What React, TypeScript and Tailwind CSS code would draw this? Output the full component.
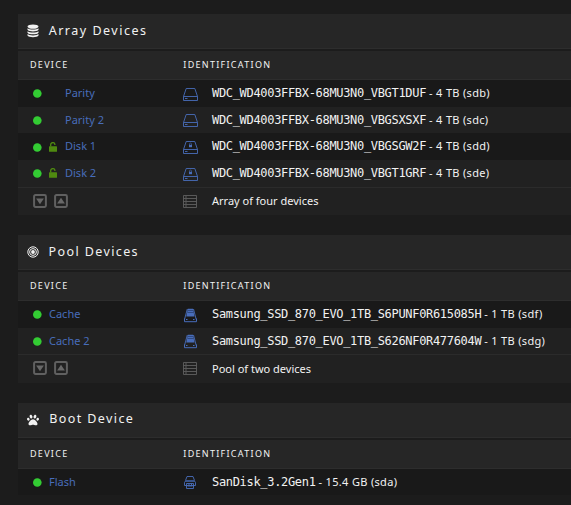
import React from 'react';
import { FaPaw } from 'react-icons/fa';

type IconKind = 'disk' | 'data' | 'ssd' | 'flash';

interface Device {
  name: string;
  icon: IconKind;
  id: string;
  size: string;
  slot?: 'empty' | 'unlocked';
}

function DatabaseIcon() {
  return (
    <svg width="12" height="14" viewBox="0 0 12 14" fill="#f2f2f2">
      <ellipse cx="6" cy="2.6" rx="5.500" ry="2.200" />
      <path d="M.5 4.300C2 6 10 6 11.500 4.300V5.800C10.500 7.900 1.500 7.900.5 5.800Z" />
      <path d="M.5 7.200C2 8.900 10 8.900 11.500 7.200V8.700C10.500 10.800 1.500 10.800.5 8.700Z" />
      <path d="M.5 10.100C2 11.800 10 11.800 11.500 10.100V11.500C10.500 13.700 1.500 13.700.5 11.500Z" />
    </svg>
  );
}

function BullseyeIcon() {
  return (
    <svg width="12" height="12" viewBox="0 0 12 12" fill="none" stroke="#f2f2f2">
      <circle cx="6" cy="6" r="5.200" strokeWidth="1" />
      <circle cx="6" cy="6" r="3.400" strokeWidth="1" />
      <circle cx="6" cy="6" r="1.900" fill="#f2f2f2" stroke="none" />
    </svg>
  );
}

function UnlockIcon() {
  return (
    <svg width="8" height="10" viewBox="0 0 8 10">
      <path d="M1.700 4.500V2.600a2.100 2 0 0 1 4.200 0V3" fill="none" stroke="#4f8a10" strokeWidth="1.300" />
      <rect y="4.300" width="8" height="5.500" rx=".5" fill="#4f8a10" />
    </svg>
  );
}

function DriveIcon({ kind }: { kind: IconKind }) {
  if (kind === 'ssd') {
    return (
      <svg width="15" height="15" viewBox="0 0 15 15" fill="none" stroke="#486dba">
        <path d="M4.300 1 1.500 11.500M10.500 1 13.200 11.500" strokeWidth=".9" />
        <path d="M4.800 .8h5.200l1.500 7.700h-8.200Z" fill="#486dba" stroke="none" />
        <path d="M5 2.500h5M4.500 4.500h6" stroke="#263b69" strokeWidth=".7" />
        <path d="M1.500 10.500v3.200h12v-3.200M3 11.500h1.500M10 11.500h1.500" />
      </svg>
    );
  }
  if (kind === 'flash') {
    return (
      <svg width="15" height="15" viewBox="0 0 15 15" fill="none" stroke="#486dba" strokeWidth=".9">
        <path d="M2.500 5.500 4 1.500h6L11.500 5.500M1.500 10.500v-3l1-1.500h9l1 1.500v3ZM3.500 8.500v5h7v-5ZM2.500 6h9M4.500 11h5M6 8.500v2.500M8.500 8.500v2.500" />
      </svg>
    );
  }
  return (
    <svg width="15" height="15" viewBox="0 0 15 15" fill="none" stroke="#486dba" strokeWidth=".9">
      <path d="M.5 9.500 3.200 1.500h8.600l2.700 8v4H.5ZM.5 9.500h14M2 11.500h2.500" />
      {kind === 'data' && (
        <>
          <path d="M6.500 5V4a1 1 0 0 1 2 0v1" strokeOpacity=".6" />
          <rect x="6" y="4.800" width="3" height="2.400" fill="#486dba" stroke="none" />
        </>
      )}
    </svg>
  );
}

function RackIcon() {
  return (
    <svg width="14" height="15" viewBox="0 0 14 15" fill="none" stroke="#606060" strokeWidth=".9">
      <path d="M.5 1.500h13v12H.5ZM.5 4.500h13M.5 7.500h13M.5 10.500h13M2 3h2M2 6h2M2 9h2M2 12h2" />
    </svg>
  );
}

function CaretBox({ up }: { up?: boolean }) {
  return (
    <svg width="14" height="14" viewBox="0 0 14 14">
      <rect x="1.100" y="1.100" width="11.800" height="11.800" rx="1.300" fill="none" stroke="#606060" strokeWidth="2" />
      <path d={up ? 'M7 3.700 10.900 9.600H3.100Z' : 'M7 10.300 10.900 4.400H3.100Z'} fill="#686868" />
    </svg>
  );
}

function Title({ icon, children, className }: { icon: React.ReactNode; children: string; className: string }) {
  return (
    <div className="flex h-[35px] items-center border-b border-[#2d2d2d] bg-[#262626] pl-[9px] text-[12.5px] text-[#f2f2f2]">
      <span className="flex w-[13px] shrink-0 justify-start pl-[0.400px]">{icon}</span>
      <h2 className={className}>{children}</h2>
    </div>
  );
}

function Head() {
  return (
    <div className="mt-[2px] flex h-[29px] items-center border-b border-[#2d2d2d] bg-[#262626] pl-3 text-[9px] text-[#f2f2f2]">
      <span className="w-[153.300px] tracking-[1.300px]">DEVICE</span>
      <span className="tracking-[1.290px]">IDENTIFICATION</span>
    </div>
  );
}

function Row({ device }: { device: Device }) {
  return (
    <div className="flex h-[26.650px] items-center whitespace-nowrap odd:bg-[#191919] even:bg-[#212121]">
      <div className="flex w-[165px] items-center pl-[15px]">
        <svg className="mr-[7px] mt-px shrink-0" width="9" height="9" viewBox="0 0 9 9">
          <circle cx="4.300" cy="4.500" r="4.300" fill="#33cc33" />
        </svg>
        {device.slot && <span className="w-4">{device.slot === 'unlocked' && <UnlockIcon />}</span>}
        <a className="text-[11px] text-[#486dba]">{device.name}</a>
      </div>
      <span className="w-[29px] pt-[1.800px]"><DriveIcon kind={device.icon} /></span>
      <span className="pb-[0.400px] font-['DejaVu_Sans_Mono',monospace] text-[12px] tracking-[-0.320px] text-[#f2f2f2]">{device.id}</span>
      <span className="ml-[3px] text-[11px] tracking-[0.320px] text-[#f2f2f2]">{device.size}</span>
    </div>
  );
}

function Summary({ text }: { text: string }) {
  return (
    <div className="flex h-[28.400px] items-center border-t border-[#2b2b2b] bg-[#212121]">
      <div className="flex w-[165px] gap-[6.500px] pb-px pl-[15px]"><CaretBox /><CaretBox up /></div>
      <span className="w-[29px]"><RackIcon /></span>
      <span className="text-[11px] text-[#f2f2f2]">{text}</span>
    </div>
  );
}

const arrayDevices: Device[] = [
  { name: 'Parity', icon: 'disk', id: 'WDC_WD4003FFBX-68MU3N0_VBGT1DUF', size: '- 4 TB (sdb)', slot: 'empty' },
  { name: 'Parity 2', icon: 'disk', id: 'WDC_WD4003FFBX-68MU3N0_VBGSXSXF', size: '- 4 TB (sdc)', slot: 'empty' },
  { name: 'Disk 1', icon: 'data', id: 'WDC_WD4003FFBX-68MU3N0_VBGSGW2F', size: '- 4 TB (sdd)', slot: 'unlocked' },
  { name: 'Disk 2', icon: 'data', id: 'WDC_WD4003FFBX-68MU3N0_VBGT1GRF', size: '- 4 TB (sde)', slot: 'unlocked' },
];
const poolDevices: Device[] = [
  { name: 'Cache', icon: 'ssd', id: 'Samsung_SSD_870_EVO_1TB_S6PUNF0R615085H', size: '- 1 TB (sdf)' },
  { name: 'Cache 2', icon: 'ssd', id: 'Samsung_SSD_870_EVO_1TB_S626NF0R477604W', size: '- 1 TB (sdg)' },
];
const bootDevices: Device[] = [
  { name: 'Flash', icon: 'flash', id: 'SanDisk_3.2Gen1', size: '- 15.4 GB (sda)' },
];

export default function App() {
  return (
    <main className="flex h-[505px] flex-col gap-5 overflow-hidden bg-[#1c1c1c] pl-[18px] pt-[14px] font-['Noto_Sans',sans-serif]">
      <section>
        <Title icon={<DatabaseIcon />} className="ml-[8.700px] tracking-[1.500px]">Array Devices</Title>
        <Head />
        <div>{arrayDevices.map((d) => <Row key={d.name} device={d} />)}</div>
        <Summary text="Array of four devices" />
      </section>
      <section>
        <Title icon={<BullseyeIcon />} className="ml-[8.500px] tracking-[1.400px]">Pool Devices</Title>
        <Head />
        <div>{poolDevices.map((d) => <Row key={d.name} device={d} />)}</div>
        <Summary text="Pool of two devices" />
      </section>
      <section>
        <Title icon={<FaPaw size={12} />} className="ml-[9.300px] tracking-[1.400px]">Boot Device</Title>
        <Head />
        <div>{bootDevices.map((d) => <Row key={d.name} device={d} />)}</div>
      </section>
    </main>
  );
}
